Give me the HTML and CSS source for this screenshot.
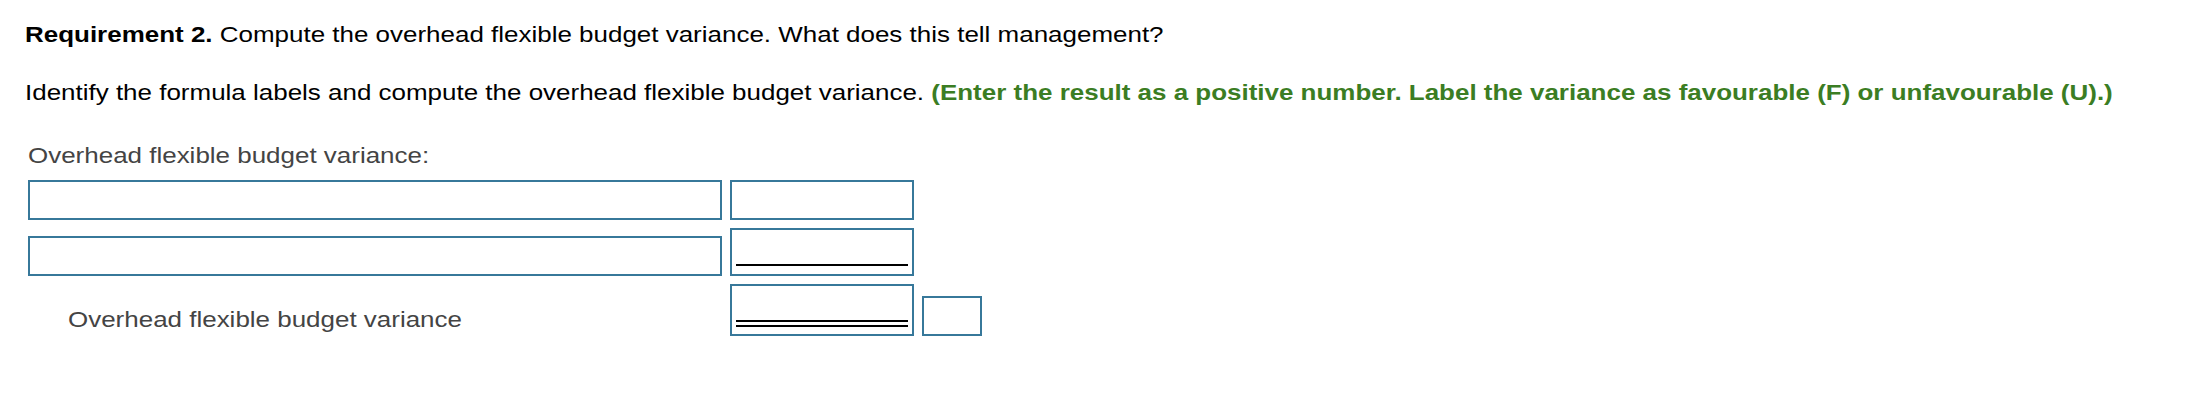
FILE: index.html
```html
<!DOCTYPE html>
<html>
<head>
<meta charset="utf-8">
<link rel="stylesheet" href="styles.css">
</head>
<body>
<div class="page">
  <p class="req"><b>Requirement 2.</b> Compute the overhead flexible budget variance. What does this tell management?</p>
  <p class="instr">Identify the formula labels and compute the overhead flexible budget variance. <span class="hint">(Enter the result as a positive number. Label the variance as favourable (F) or unfavourable (U).)</span></p>
  <div class="work">
    <div class="title"><span class="stretch">Overhead flexible budget variance:</span></div>
    <div class="grid">
      <div class="row">
        <div class="box wide"></div>
        <div class="box amt"></div>
      </div>
      <div class="row">
        <div class="box wide"></div>
        <div class="box amt tall"><span class="single"></span></div>
      </div>
      <div class="row">
        <div class="rowlabel"><span class="stretch">Overhead flexible budget variance</span></div>
        <div class="box amt taller"><span class="double"></span></div>
        <div class="box fu"></div>
      </div>
    </div>
  </div>
</div>
</body>
</html>
```

FILE: styles.css
```css
html, body {
  margin: 0;
  padding: 0;
  background: #fff;
}
.page {
  font-family: "Liberation Sans", Arial, sans-serif;
  color: #000;
  padding: 23px 0 0 25px;
}
.req, .instr {
  margin: 0;
  width: max-content;
  font-size: 22px;
  line-height: 24px;
  white-space: nowrap;
  transform: scaleX(1.18);
  transform-origin: left center;
}
.instr {
  margin-top: 34px;
}
.hint {
  color: #3b7d23;
  font-weight: bold;
}
.stretch {
  display: inline-block;
  white-space: nowrap;
  transform: scaleX(1.18);
  transform-origin: left center;
}
.work {
  margin-top: 38px;
  padding-left: 3px;
}
.title {
  color: #444;
  font-size: 22px;
  line-height: 26px;
}
.grid {
  margin-top: 11px;
  display: flex;
  flex-direction: column;
  gap: 8px;
}
.row {
  display: flex;
  align-items: flex-end;
  gap: 8px;
}
.box {
  box-sizing: border-box;
  border: 2px solid #37789a;
  height: 40px;
  background: #fff;
}
.wide {
  width: 694px;
}
.amt {
  width: 184px;
  display: flex;
  flex-direction: column;
  justify-content: flex-end;
  padding: 0 4px 8px;
}
.amt.tall {
  height: 48px;
}
.amt.taller {
  height: 52px;
}
.single {
  display: block;
  height: 2px;
  background: #000;
}
.double {
  display: block;
  height: 3px;
  border-top: 2px solid #000;
  border-bottom: 2px solid #000;
  margin-bottom: -1px;
}
.fu {
  width: 60px;
}
.rowlabel {
  width: 694px;
  box-sizing: border-box;
  padding-left: 40px;
  padding-top: 20px;
  color: #444;
  font-size: 22px;
  line-height: 26px;
  align-self: center;
}
```
